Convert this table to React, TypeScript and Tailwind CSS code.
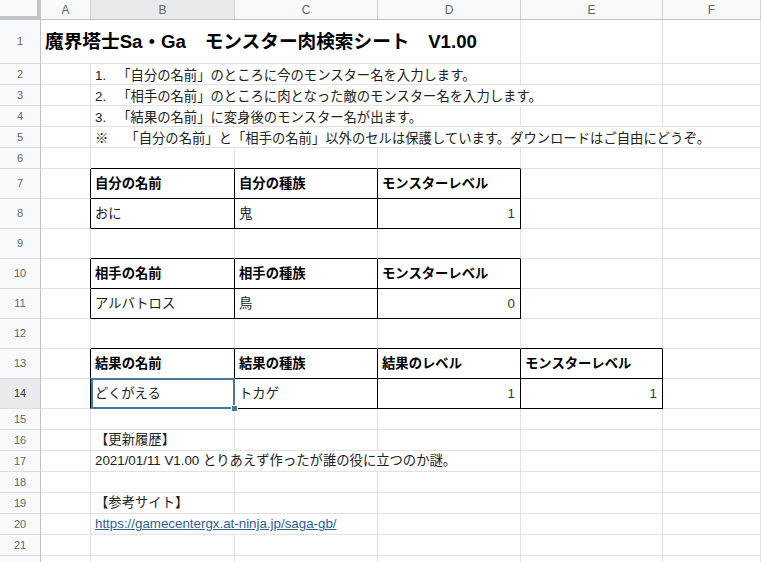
import React from "react";

type Kind = "title" | "head" | "num" | "text" | "link";
type Cell = { t?: string; span?: number; kind?: Kind; selected?: boolean };
type Row = { n: number; h: string; cells?: Cell[]; low?: boolean };

const COLS = "grid grid-cols-[41px_50px_144px_143px_143px_142px_1fr]";
const LETTERS = ["A", "B", "C", "D", "E", "F"];

const SPAN: Record<number, string> = {
  1: "col-span-1",
  2: "col-span-2",
  3: "col-span-3",
  4: "col-span-4",
  5: "col-span-5",
};

// black bordered blocks (A=0 ... F=5)
const tables = [
  { r0: 7, r1: 8, c0: 1, c1: 3 },
  { r0: 10, r1: 11, c0: 1, c1: 3 },
  { r0: 13, r1: 14, c0: 1, c1: 4 },
];
const inTable = (r: number, c: number) =>
  tables.some((t) => r >= t.r0 && r <= t.r1 && c >= t.c0 && c <= t.c1);

const rows: Row[] = [
  {
    n: 1,
    h: "h-[44px]",
    cells: [
      { t: "魔界塔士Sa・Ga　モンスター肉検索シート　V1.00", span: 4, kind: "title" },
      {},
      {},
    ],
  },
  {
    n: 2,
    h: "h-[21px]",
    low: true,
    cells: [{}, { t: "1. \u00a0\u00a0「自分の名前」のところに今のモンスター名を入力します。", span: 3 }, {}, {}],
  },
  {
    n: 3,
    h: "h-[21px]",
    low: true,
    cells: [
      {},
      { t: "2. \u00a0\u00a0「相手の名前」のところに肉となった敵のモンスター名を入力します。", span: 4 },
      {},
    ],
  },
  {
    n: 4,
    h: "h-[21px]",
    low: true,
    cells: [{}, { t: "3. \u00a0\u00a0「結果の名前」に変身後のモンスター名が出ます。", span: 3 }, {}, {}],
  },
  {
    n: 5,
    h: "h-[21px]",
    low: true,
    cells: [
      {},
      {
        t: "※　\u00a0「自分の名前」と「相手の名前」以外のセルは保護しています。ダウンロードはご自由にどうぞ。",
        span: 5,
      },
    ],
  },
  { n: 6, h: "h-[21px]" },
  {
    n: 7,
    h: "h-[30px]",
    cells: [
      {},
      { t: "自分の名前", kind: "head" },
      { t: "自分の種族", kind: "head" },
      { t: "モンスターレベル", kind: "head" },
      {},
      {},
    ],
  },
  {
    n: 8,
    h: "h-[30px]",
    cells: [{}, { t: "おに" }, { t: "鬼" }, { t: "1", kind: "num" }, {}, {}],
  },
  { n: 9, h: "h-[30px]" },
  {
    n: 10,
    h: "h-[30px]",
    cells: [
      {},
      { t: "相手の名前", kind: "head" },
      { t: "相手の種族", kind: "head" },
      { t: "モンスターレベル", kind: "head" },
      {},
      {},
    ],
  },
  {
    n: 11,
    h: "h-[30px]",
    cells: [{}, { t: "アルバトロス" }, { t: "鳥" }, { t: "0", kind: "num" }, {}, {}],
  },
  { n: 12, h: "h-[30px]" },
  {
    n: 13,
    h: "h-[30px]",
    cells: [
      {},
      { t: "結果の名前", kind: "head" },
      { t: "結果の種族", kind: "head" },
      { t: "結果のレベル", kind: "head" },
      { t: "モンスターレベル", kind: "head" },
      {},
    ],
  },
  {
    n: 14,
    h: "h-[30px]",
    cells: [
      {},
      { t: "どくがえる", selected: true },
      { t: "トカゲ" },
      { t: "1", kind: "num" },
      { t: "1", kind: "num" },
      {},
    ],
  },
  { n: 15, h: "h-[21px]" },
  { n: 16, h: "h-[21px]", cells: [{}, { t: "【更新履歴】" }, {}, {}, {}, {}] },
  {
    n: 17,
    h: "h-[21px]",
    cells: [{}, { t: "2021/01/11 V1.00 とりあえず作ったが誰の役に立つのか謎。", span: 3 }, {}, {}],
  },
  { n: 18, h: "h-[21px]" },
  { n: 19, h: "h-[21px]", cells: [{}, { t: "【参考サイト】" }, {}, {}, {}, {}] },
  {
    n: 20,
    h: "h-[21px]",
    cells: [{}, { t: "https://gamecentergx.at-ninja.jp/saga-gb/", span: 2, kind: "link" }, {}, {}, {}],
  },
  { n: 21, h: "h-[21px]" },
  { n: 22, h: "h-[21px]" },
];

const kindClass = (k?: Kind) => {
  switch (k) {
    case "title":
      return "text-[18.67px] font-bold text-black";
    case "head":
      return "font-bold text-black";
    case "num":
      return "justify-end pr-[5px] text-[#333]";
    case "link":
      return "text-[#2f5f92] underline";
    default:
      return "text-[#222]";
  }
};

const SheetRow = ({ row }: { row: Row }) => {
  const cells: Cell[] = row.cells ?? [{}, {}, {}, {}, {}, {}];
  const current = row.n === 14;
  let col = 0;

  return (
    <div className={`${COLS} ${row.h}`}>
      {/* row number */}
      <div
        className={`flex items-center justify-center border-r border-r-[#c0c0c0] border-b border-b-[#dcdcdc] text-[11px] ${
          current ? "bg-[#e8eaed] text-[#333]" : "bg-[#f8f9fa] text-[#666]"
        }`}
      >
        {row.n}
      </div>

      {cells.map((cell, i) => {
        const span = cell.span ?? 1;
        const start = col;
        const end = col + span - 1;
        col += span;

        const rightBlack = inTable(row.n, end) || inTable(row.n, end + 1);
        const bottomBlack = inTable(row.n, start) || inTable(row.n + 1, start);

        return (
          <div
            key={i}
            className={`relative flex items-center whitespace-nowrap pl-[4px] leading-[16px] ${
              SPAN[span]
            } ${rightBlack ? "border-r border-r-black" : "border-r border-r-[#e2e2e2]"} ${
              bottomBlack ? "border-b border-b-black" : "border-b border-b-[#e2e2e2]"
            } ${row.low ? "pt-[4px]" : ""} ${kindClass(cell.kind)}`}
          >
            {cell.t}
            {cell.selected && (
              <>
                <div className="pointer-events-none absolute left-0 -top-px -right-px -bottom-px border-2 border-[#4677a0]" />
                <div className="absolute -right-[4px] -bottom-[4px] z-10 h-[7px] w-[7px] border border-white bg-[#4677a0]" />
              </>
            )}
          </div>
        );
      })}
    </div>
  );
};

const App = () => {
  return (
    <div className="h-[562px] w-[761px] overflow-hidden bg-white font-['Liberation_Sans','Noto_Sans_CJK_JP',sans-serif] text-[13.33px]">
      {/* column headers */}
      <div className={`${COLS} h-[20px]`}>
        <div className="border-r-4 border-b-4 border-[#c4c4c4] bg-[#f8f9fa]" />
        {LETTERS.map((l) => (
          <div
            key={l}
            className={`flex items-center justify-center border-r border-r-[#d0d0d0] border-b border-b-[#c0c0c0] text-[12px] text-[#666] ${
              l === "B" ? "bg-[#e8eaed]" : "bg-[#f8f9fa]"
            }`}
          >
            {l}
          </div>
        ))}
      </div>

      {rows.map((r) => (
        <SheetRow key={r.n} row={r} />
      ))}
    </div>
  );
};

export default App;
